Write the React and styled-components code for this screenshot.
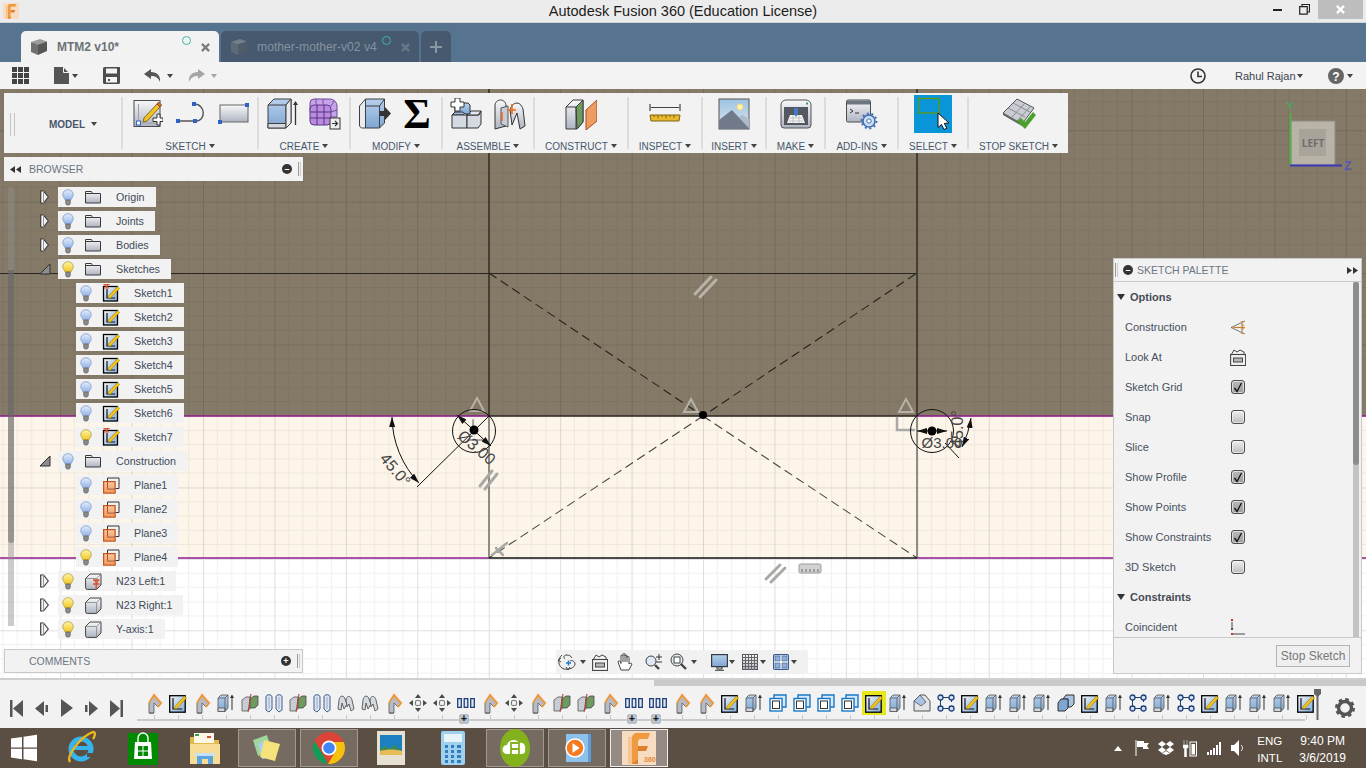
import styled, { createGlobalStyle } from 'styled-components'

const GlobalStyle = createGlobalStyle`
html, body {
  margin: 0;
  padding: 0;
  background: #fff;
}
body {
  font-family: "Liberation Sans", Arial, sans-serif;
}
* {
  box-sizing: border-box;
}
`

const Page = styled.div`
width: 1366px;
height: 768px;
overflow: hidden;
display: flex;
flex-direction: column;
`
const DefsSvg = styled.svg`
display: block;
flex: none;
`

/* window title */
const TitleBar = styled.div`
height: 23px;
flex: none;
display: grid;
grid-template-columns: 1fr auto 1fr;
align-items: start;
background: #ececec;
border-bottom: 1px solid #d4d4d4;
`
const AppBadge = styled.div`
width: 16px;
height: 16px;
margin: 3px 0 0 3px;
`
const WindowTitle = styled.div`
line-height: 23px;
font-size: 14.5px;
color: #1c1c1c;
`
const WinControls = styled.div`
justify-self: end;
display: flex;
padding-right: 3px;
`
const WinBtn = styled.div`
width: ${p => p.$w}px;
height: 19px;
display: flex;
align-items: center;
justify-content: center;
background: ${p => p.$close ? '#bdbdbd' : 'transparent'};
`

/* document tabs */
const TabBar = styled.div`
height: 39px;
flex: none;
display: flex;
align-items: flex-end;
gap: 2px;
padding-left: 21px;
background: #56738f;
`
const Tab = styled.div`
height: 31px;
width: ${p => p.$w}px;
display: flex;
align-items: center;
justify-content: ${p => p.$center ? 'center' : 'flex-start'};
border-radius: 5px 5px 0 0;
background: ${p => p.$active ? '#f2f2f2' : '#46596e'};
`
const TabName = styled.span`
font-size: ${p => p.$active ? 12 : 12.2}px;
font-weight: ${p => p.$active ? 700 : 400};
color: ${p => p.$active ? '#6d7277' : '#8592a0'};
margin-left: 10px;
white-space: nowrap;
`
const TabCube = styled.div`
margin-left: 10px;
display: flex;
`
const TabDot = styled.div`
margin: 5px 0 0 auto;
align-self: flex-start;
width: 9px;
height: 9px;
border-radius: 50%;
border: 1px solid #3fb5a5;
`
const TabClose = styled.div`
margin: 1px 9px 0 10px;
display: flex;
`

/* quick access row */
const QuickBar = styled.div`
height: 27px;
flex: none;
display: flex;
align-items: center;
background: #f3f3f3;
padding: 0 13px 0 12px;
`
const QuickItem = styled.div`
display: flex;
align-items: center;
margin-left: ${p => p.$auto ? 'auto' : `${p.$ml || 0}px`};
`
const UserName = styled.span`
font-size: 11px;
color: #3b4350;
margin-left: 29px;
width: 62px;
`
const Caret = styled.span`
display: inline-block;
width: 0;
height: 0;
flex: none;
border-left: 3.5px solid transparent;
border-right: 3.5px solid transparent;
border-top: 4px solid ${p => p.$c || '#444'};
margin-left: ${p => p.$ml || 0}px;
margin-top: ${p => p.$mt || 0}px;
`

/* 3D area */
const Viewport = styled.div`
position: relative;
height: 589px;
flex: none;
overflow: hidden;
display: flex;
flex-direction: column;
padding: 4px 0 5px 4px;
background: #857a68;
`
const CanvasSvg = styled.svg`
position: absolute;
left: 0;
top: 0;
`

const Toolbar = styled.div`
position: relative;
width: 1064px;
height: 60px;
flex: none;
display: flex;
background: #f2f2f2;
`
const ModelGroup = styled.div`
width: 117px;
flex: none;
display: flex;
align-items: center;
padding: 2px 0 0 6px;
`
const Grip = styled.div`
width: 5px;
height: 23px;
border-left: 1px solid #c4c4c4;
border-right: 1px solid #c4c4c4;
`
const ModelLabel = styled.span`
font-size: 10px;
font-weight: 700;
color: #47566b;
margin-left: 34px;
`
const ToolSep = styled.div`
width: 2px;
flex: none;
height: 52px;
align-self: center;
background: #dcdcdc;
`
const ToolGroup = styled.div`
width: ${p => p.$w}px;
flex: none;
display: flex;
flex-direction: column;
align-items: center;
`
const ToolIcons = styled.div`
height: 38px;
margin-top: 2px;
display: flex;
align-items: center;
gap: ${p => p.$gap || 10}px;
`
const ToolLabel = styled.div`
height: 20px;
padding-top: 8px;
display: flex;
align-items: flex-start;
font-size: 10px;
line-height: 12px;
color: #47566b;
white-space: nowrap;
`
const SigmaGlyph = styled.span`
width: 32px;
text-align: center;
font-family: "Liberation Serif", serif;
font-weight: 700;
font-size: 42px;
line-height: 32px;
color: #000;
`

/* browser panel */
const PanelHead = styled.div`
position: relative;
width: 299px;
height: ${p => p.$h}px;
flex: none;
display: flex;
align-items: center;
background: #f2f2f2;
margin-top: ${p => p.$auto ? 'auto' : `${p.$mt || 0}px`};
border: ${p => p.$border ? '1px solid #c9c9c9' : 'none'};
`
const PanelName = styled.span`
font-size: 10.5px;
color: #6b7683;
margin-left: ${p => p.$ml}px;
`
const PanelTools = styled.div`
margin-left: auto;
display: flex;
align-items: center;
gap: 6px;
padding-right: ${p => p.$pr || 2}px;
`
const RoundBtn = styled.div`
width: 10px;
height: 10px;
border-radius: 50%;
background: #333;
margin-left: ${p => p.$ml || 0}px;
display: flex;
align-items: center;
justify-content: center;
color: #fff;
font-size: 9px;
line-height: 10px;
font-weight: 700;
`
const MiniGrip = styled.div`
width: 3px;
height: 14px;
border-left: 1px solid #999;
border-right: 1px solid #ccc;
`
const Tree = styled.div`
position: relative;
margin-top: 6px;
display: flex;
flex-direction: column;
gap: 4px;
`
const TreeRow = styled.div`
display: flex;
align-items: center;
height: 20px;
padding-left: ${p => p.$child ? 72 : 34}px;
`
const TreeArrow = styled.div`
width: 20px;
height: 20px;
padding-left: ${p => p.$open ? 1 : 2}px;
display: flex;
align-items: center;
`
const Chip = styled.div`
height: 20px;
display: flex;
align-items: center;
background: #f2f2f2;
padding-right: 11px;
`
const ChipBulb = styled.div`
width: 20px;
display: flex;
justify-content: center;
`
const ChipIcon = styled.div`
width: 30px;
display: flex;
justify-content: center;
`
const ChipText = styled.span`
margin-left: 8px;
font-size: 10.7px;
color: #404a58;
white-space: nowrap;
`
const TreeTrack = styled.div`
position: absolute;
left: 4px;
top: 0;
width: 6px;
height: 439px;
background: rgba(140,140,140,.45);
`
const TreeThumb = styled.div`
margin-top: 83px;
height: 273px;
border-radius: 0 0 3px 3px;
background: rgba(80,80,80,.42);
`

/* sketch palette */
const Palette = styled.div`
position: absolute;
left: 1113px;
top: 169px;
width: 249px;
height: 416px;
display: flex;
flex-direction: column;
background: #f2f2f2;
border: 1px solid #c9c9c9;
`
const PaletteHead = styled.div`
height: 23px;
flex: none;
display: flex;
align-items: center;
border-bottom: 1px solid #c9c9c9;
padding-left: 1px;
`
const PaletteBody = styled.div`
position: relative;
flex: 1;
overflow: hidden;
`
const SectionHead = styled.div`
height: 30px;
display: flex;
align-items: center;
padding-left: 3px;
font-size: 11px;
font-weight: 700;
color: #464c55;
gap: 5px;
`
const SectionCaret = styled.span`
width: 0;
height: 0;
border-left: 4px solid transparent;
border-right: 4px solid transparent;
border-top: 6px solid #333;
`
const OptionRow = styled.div`
height: 30px;
display: flex;
align-items: center;
padding-left: 11px;
`
const OptionName = styled.span`
width: 102px;
font-size: 11px;
color: #46505e;
white-space: nowrap;
`
const OptionCell = styled.div`
width: 22px;
display: flex;
justify-content: center;
`
const CheckBox = styled.div`
width: 14px;
height: 14px;
border-radius: 3px;
border: 1px solid #4d4d4d;
background: ${p => p.$on ? 'linear-gradient(#b9b9b9, #9d9d9d)' : 'linear-gradient(#f0f0f0, #bcbcbc)'};
box-shadow: inset 0 0 0 1px rgba(255,255,255,.55);
display: flex;
align-items: center;
justify-content: center;
`
const PaletteTrack = styled.div`
position: absolute;
right: 2px;
top: 0;
bottom: 0;
width: 6px;
background: #c3c3c3;
`
const PaletteThumb = styled.div`
height: 183px;
border-radius: 3px;
background: #8d8d8d;
`
const PaletteFoot = styled.div`
height: 36px;
flex: none;
display: flex;
justify-content: flex-end;
align-items: center;
padding-right: 11px;
border-top: 1px solid #c9c9c9;
`
const StopBtn = styled.div`
width: 74px;
height: 22px;
border: 1px solid #b4b4b4;
background: #efefef;
font-size: 12px;
line-height: 20px;
text-align: center;
color: #787878;
`

/* bottom navigation */
const NavBar = styled.div`
position: absolute;
left: 556px;
top: 561px;
width: 252px;
height: 24px;
display: flex;
align-items: center;
background: #f1f1f1;
`
const NavItem = styled.div`
width: ${p => p.$w}px;
margin-left: ${p => p.$ml || 0}px;
flex: none;
display: flex;
justify-content: center;
align-items: center;
`

/* timeline */
const Timeline = styled.div`
height: 50px;
flex: none;
background: #f2f2f2;
border-top: 2px solid #cfcfcf;
`
const TimelineScroll = styled.div`
height: 6px;
margin-left: 654px;
background: #c9c9c9;
`
const TimelineRow = styled.div`
display: flex;
`
const Playback = styled.div`
width: 142px;
flex: none;
display: flex;
padding: 10px 0 0 4px;
`
const PlayBtn = styled.div`
width: 25px;
height: 24px;
display: flex;
align-items: center;
justify-content: center;
`
const Strip = styled.div`
position: relative;
display: flex;
height: 35px;
`
const StripRail = styled.div`
position: absolute;
left: -5px;
right: 13px;
top: 33px;
height: 2px;
background: #cbcbcb;
`
const StripItem = styled.div`
position: relative;
width: 24px;
flex: none;
padding-top: 5px;
&::after {
  content: "";
  position: absolute;
  left: 12px;
  top: 29px;
  width: 1px;
  height: 5px;
  background: #c9c9c9;
}
`
const StripIcon = styled.div`
width: 24px;
height: 24px;
display: flex;
align-items: center;
justify-content: center;
background: ${p => p.$on ? '#e6e61c' : 'transparent'};
`
const StripPlus = styled.div`
position: absolute;
left: ${p => p.$x}px;
top: 28px;
width: 10px;
height: 10px;
border-radius: 2px;
background: #b9c0c9;
color: #111;
font-size: 10px;
line-height: 10px;
text-align: center;
font-weight: 700;
`
const Marker = styled.div`
position: absolute;
left: 1172px;
top: 3px;
width: 7px;
height: 31px;
display: flex;
justify-content: center;
`
const GearCell = styled.div`
margin-left: 17px;
padding-top: 12px;
`

/* windows taskbar */
const Taskbar = styled.div`
height: 40px;
flex: none;
display: flex;
align-items: center;
gap: 4px;
background: #5b4f43;
`
const TaskItem = styled.div`
width: ${p => p.$w || 58}px;
height: 38px;
flex: none;
display: flex;
align-items: center;
justify-content: center;
border: 1px solid ${p => p.$on === 2 ? '#eeeeee' : p.$on ? 'rgba(255,255,255,.32)' : 'transparent'};
background: ${p => p.$on === 2 ? 'rgba(255,255,255,.34)' : p.$on ? 'rgba(255,255,255,.16)' : 'transparent'};
`
const Tray = styled.div`
margin-left: auto;
display: flex;
align-items: center;
padding-right: 20px;
color: #fff;
`
const TrayIcon = styled.div`
width: 24px;
display: flex;
justify-content: center;
`
const TrayText = styled.div`
display: flex;
flex-direction: column;
align-items: center;
gap: 3px;
padding-top: 2px;
font-size: ${p => p.$fs}px;
line-height: 14px;
margin-left: ${p => p.$ml}px;
white-space: nowrap;
`

/* drawings */
const Defs = () => (
  <DefsSvg width="0" height="0">
    <defs>
      <linearGradient id="gBlue" x1="0" y1="0" x2="0" y2="1">
        <stop offset="0" stopColor="#b6d0ec" />
        <stop offset="1" stopColor="#7fa5d3" />
      </linearGradient>
      <linearGradient id="gGrey" x1="0" y1="0" x2="0" y2="1">
        <stop offset="0" stopColor="#f8f8fa" />
        <stop offset="1" stopColor="#adb4c0" />
      </linearGradient>
      <linearGradient id="gSheet" x1="0" y1="0" x2="1" y2="1">
        <stop offset="0" stopColor="#f4f6fa" />
        <stop offset="1" stopColor="#7faad8" />
      </linearGradient>
      <linearGradient id="gBulbBlue" x1="0" y1="0" x2="0" y2="1">
        <stop offset="0" stopColor="#e6effc" />
        <stop offset="1" stopColor="#92b2e8" />
      </linearGradient>
      <linearGradient id="gBulbGold" x1="0" y1="0" x2="0" y2="1">
        <stop offset="0" stopColor="#fff6a8" />
        <stop offset="1" stopColor="#f0c81e" />
      </linearGradient>
      <linearGradient id="gPic" x1="0" y1="0" x2="0" y2="1">
        <stop offset="0" stopColor="#9ec3e2" />
        <stop offset="1" stopColor="#dbe6ef" />
      </linearGradient>
      <linearGradient id="gOrange" x1="0" y1="0" x2="0" y2="1">
        <stop offset="0" stopColor="#f9c9a0" />
        <stop offset="1" stopColor="#ef9a5e" />
      </linearGradient>
    </defs>
  </DefsSvg>
)

const Bulb = ({ on }) => (
  <svg width="12" height="17" viewBox="0 0 12 17">
    <path d="M6 .7C3 .7.8 2.9.8 5.6c0 2.3 1.6 3.4 2.4 5.4h5.6c.8-2 2.4-3.1 2.4-5.4C11.2 2.9 9 .7 6 .7z" fill={`url(#${on ? 'gBulbGold' : 'gBulbBlue'})`} stroke={on ? '#b09a3a' : '#7e96c4'} strokeWidth=".8" />
    <path d="M3.7 11h4.600v3.400l-1 1.600H4.700l-1-1.600z" fill="#8b8b8b" stroke="#555" strokeWidth=".6" />
  </svg>
)
const Folder = () => (
  <svg width="16" height="14" viewBox="0 0 16 14">
    <path d="M.5 13V1.500h6l1 2h8V13z" fill="url(#gGrey)" stroke="#3c3c3c" />
    <path d="M.5 3.500h7" stroke="#3c3c3c" />
  </svg>
)
const SketchLeaf = ({ pin }) => (
  <svg width="18" height="18" viewBox="0 0 18 18">
    <rect x="1.5" y="2.5" width="14" height="14.5" fill="url(#gSheet)" stroke="#000" strokeWidth="1.3" />
    <path d="M5 5v9h8" fill="none" stroke="#111" strokeWidth="1.2" />
    <path d="M6.500 12l9-9.500 2 2-9 9.500-2.500.4z" fill="#f2c318" stroke="#9a7a10" strokeWidth=".6" />
    {pin && <path d="M1.500 .5h6M3 .8l1.500 2.500L6 .8M2 4h5" stroke="#e0512a" strokeWidth="1.2" fill="none" />}
  </svg>
)
const PlaneLeaf = () => (
  <svg width="17" height="17" viewBox="0 0 17 17">
    <path d="M4.500 4.500V1h11.500v10.500h-4" fill="none" stroke="#333" />
    <rect x=".6" y="4.6" width="11.5" height="11.5" fill="url(#gOrange)" stroke="#c4541b" strokeWidth="1.2" />
    <path d="M4.500 4.800v7.300h7.400" fill="none" stroke="#a85a2e" />
  </svg>
)
const BodyLeaf = ({ pin }) => (
  <svg width="17" height="17" viewBox="0 0 17 17">
    <path d="M.6 5.500L5 1h11v11l-4.400 4.400H2.400a1.800 1.800 0 01-1.800-1.800z" fill="url(#gGrey)" stroke="#444" />
    <path d="M.6 5.500h11v10.900M11.600 5.500L16 1" fill="none" stroke="#777" strokeWidth=".7" />
    {pin && <path d="M8 7h6.500M9.500 7l2 3 2-3M8 11h6.500M11.200 11v5" stroke="#dd4f26" strokeWidth="1.3" fill="none" />}
  </svg>
)
const Closed = () => (
  <svg width="9" height="14" viewBox="0 0 9 14">
    <path d="M.7 1h2.800L8.300 7l-4.800 6H.7z" fill="#f2f2f2" stroke="#3c3c3c" strokeWidth="1.2" />
    <path d="M3.500 1v12" stroke="#9a9a9a" />
  </svg>
)
const Opened = () => (
  <svg width="12" height="12" viewBox="0 0 12 12">
    <path d="M11 1v10H1z" fill="#8d8d8d" stroke="#2e2e2e" />
  </svg>
)
const DoubleArrow = ({ left, c = '#333' }) => (
  <svg width="11" height="7" viewBox="0 0 11 7">
    <path d={left ? 'M5 0v7L0 3.500zM11 0v7L6 3.500z' : 'M0 0v7l5-3.500zM6 0v7l5-3.500z'} fill={c} />
  </svg>
)
const Cube = ({ c = '#6f6f6f', t = '#9a9a9a', s = '#575757' }) => (
  <svg width="16" height="16" viewBox="0 0 16 16">
    <path d="M0 3l9-3 7 2.500-9 3z" fill={t} />
    <path d="M0 3l7 2.500V16L0 13z" fill={c} />
    <path d="M7 5.500l9-3V12l-9 4z" fill={s} />
  </svg>
)
const CrossMark = ({ c, s = 9, w = 2.5 }) => (
  <svg width={s} height={s} viewBox="0 0 10 10">
    <path d="M1 1l8 8M9 1l-8 8" stroke={c} strokeWidth={w} />
  </svg>
)

/* toolbar art */
const IconSketch = () => (
  <svg width="32" height="32" viewBox="0 0 32 32">
    <rect x="3" y="2.500" width="26" height="26" fill="url(#gGrey)" stroke="#4a4a4a" />
    <path d="M7.500 25V6M7.500 25H25" stroke="#9aa0aa" />
    <rect x="5.500" y="23" width="4" height="4" fill="#fff" stroke="#2f66c8" />
    <path d="M13 20l13-14 3 3-13 14-4 1z" fill="#f3c22b" stroke="#8b6a12" />
    <path d="M26 6l1.500-2 3 3-1.500 2z" fill="#e2703a" stroke="#8b4a12" />
    <path d="M22 20h4v-4h3v4h3v3.500h-3V27h-3v-3.500h-4z" fill="#fff" stroke="#333" />
  </svg>
)
const IconLine = () => (
  <svg width="32" height="32" viewBox="0 0 32 32">
    <path d="M4 23h18M20 6c12 0 12 17 2 17" fill="none" stroke="#555" strokeWidth="1.4" />
    <rect x="2" y="21" width="4" height="4" fill="#2f62c4" />
    <rect x="19" y="21" width="4" height="4" fill="#2f62c4" />
    <rect x="18" y="4" width="4" height="4" fill="#2f62c4" />
  </svg>
)
const IconRect = () => (
  <svg width="32" height="32" viewBox="0 0 32 32">
    <rect x="3" y="7" width="28" height="17" fill="url(#gGrey)" stroke="#666" />
    <rect x="28" y="5" width="4" height="4" fill="#2f62c4" />
    <rect x="1" y="22" width="4" height="4" fill="#2f62c4" />
  </svg>
)
const IconExtrude = () => (
  <svg width="32" height="32" viewBox="0 0 32 32">
    <path d="M1 7l6-6h17v24l-5 5H1z" fill="url(#gBlue)" stroke="#3f3f3f" />
    <path d="M1 7h18v23M19 7l5-6" fill="none" stroke="#3f3f3f" />
    <path d="M1 25.500h18V30H1z" fill="#d4d8de" stroke="#3f3f3f" />
    <path d="M19 7l5-6v24l-5 5z" fill="#e6ebf2" stroke="#3f3f3f" />
    <path d="M28.500 27V5" stroke="#333" strokeWidth="1.3" />
    <path d="M26 7l2.500-4L31 7z" fill="#333" />
  </svg>
)
const IconForm = () => (
  <svg width="32" height="32" viewBox="0 0 32 32">
    <path d="M5 1h16a7 7 0 017 7v11H8a7 7 0 01-7-7V5a4 4 0 014-4z" fill="#c8a3e8" stroke="#6b4a9a" />
    <rect x="1" y="7" width="21" height="20" rx="4" fill="#b98ae0" stroke="#5a3a8a" />
    <path d="M8 7v20M15 7v20M1 14h21M1 20h21" stroke="#54357f" />
    <path d="M8 1c-2 2-1 4 0 6M15 1c-2 2-1 4 0 6M24 3c1 2-1 3-2 5M28 12l-6 2" stroke="#6b4a9a" fill="none" />
    <rect x="21" y="20" width="10" height="11" fill="#eee" stroke="#333" />
    <path d="M23 25.500h5M26 23l2.500 2.500L26 28" stroke="#333" strokeWidth="1.2" fill="none" />
  </svg>
)
const IconPress = () => (
  <svg width="32" height="32" viewBox="0 0 32 32">
    <path d="M0.500 8l6-7v29h-3c-1.500 0-3-1-3-3z" fill="#e8ebf0" stroke="#3f3f3f" />
    <path d="M6.500 1h19v24l-5 5h-14z" fill="url(#gBlue)" stroke="#3f3f3f" />
    <path d="M6.500 8h14v22M20.500 8l5-7" fill="none" stroke="#3f3f3f" />
    <path d="M21 13h5v-4l6 6.500-6 6.500v-4h-5z" fill="#333" />
  </svg>
)
const IconAssemble = () => (
  <svg width="32" height="32" viewBox="0 0 32 32">
    <path d="M2 17h11l4-4h-11z" fill="#9db8dc" stroke="#333" />
    <path d="M2 17h15v13H2z" fill="#d5dae2" stroke="#333" />
    <path d="M17 30V17h12l2-4v13l-3 4z" fill="#d5dae2" stroke="#333" />
    <path d="M17 17l4-4h10l-3 4z" fill="#e5e8ee" stroke="#333" />
    <path d="M7 5h11l2 2v9h-5l-2-2H5V5z" fill="url(#gBlue)" stroke="#333" />
    <path d="M5 0h5v4h4v5h-4v4H5V9H1V4h4z" fill="#fff" stroke="#333" />
  </svg>
)
const IconJoint = () => (
  <svg width="32" height="32" viewBox="0 0 32 32">
    <path d="M1 8c0-8 11-8 11 0v20l-11 3z" fill="url(#gGrey)" stroke="#333" />
    <path d="M7 10l7-2v21l-7-3z" fill="#c8ccd4" stroke="#555" />
    <path d="M16 12c2-8 10-10 13-1l2 17-5 3-3-16-5 12z" fill="url(#gGrey)" stroke="#333" />
    <path d="M8 23v-9M18 6v10M14 12h8" stroke="#ef6a17" strokeWidth="1.6" />
  </svg>
)
const IconPlane = () => (
  <svg width="32" height="32" viewBox="0 0 32 32">
    <path d="M1 9l7-7h10v22l-6 7H1z" fill="url(#gGrey)" stroke="#3c3c3c" />
    <path d="M11 9l7-7v22l-6 7z" fill="#6e9a5e" stroke="#3c3c3c" />
    <path d="M1 9h10v22" fill="none" stroke="#3c3c3c" />
    <path d="M21 12l11-10v21l-11 9z" fill="#ee9c62" stroke="#a35020" />
  </svg>
)
const IconRuler = () => (
  <svg width="32" height="24" viewBox="0 0 32 24">
    <path d="M2 5.500h28M1 2v7M31 2v7" stroke="#444" strokeWidth="1.2" />
    <path d="M1 13h30l-1 6H2z" fill="#e9b82d" stroke="#7d6412" />
    <path d="M5 13v2M9 13v3M13 13v2M17 13v3M21 13v2M25 13v3" stroke="#7d6412" />
  </svg>
)
const IconPicture = () => (
  <svg width="32" height="32" viewBox="0 0 32 32">
    <rect x="1" y="1" width="30" height="30" fill="url(#gPic)" stroke="#555" />
    <circle cx="22" cy="9" r="3" fill="#fff5b0" stroke="#f5d878" />
    <path d="M1 31V22l13-10 17 18v1z" fill="#707a88" />
    <path d="M14 12l17 18v-9l-6-4-5 2z" fill="#adbccb" />
  </svg>
)
const IconPrinter = () => (
  <svg width="32" height="32" viewBox="0 0 32 32">
    <path d="M1 7a5 5 0 015-5h20a5 5 0 015 5v20a3 3 0 01-3 3H4a3 3 0 01-3-3z" fill="url(#gGrey)" stroke="#555" />
    <rect x="4" y="9" width="24" height="18" fill="#53575f" />
    <path d="M7 25l3-8h12l3 8z" fill="#f2f2f2" />
    <path d="M14 10h4v6l-2 3-2-3z" fill="#4679c5" />
    <path d="M10 20h12M9 23h14M13 17v8M19 17v8" stroke="#aaa" strokeWidth=".6" />
    <rect x="26" y="4.500" width="2" height="2" fill="#2aa14a" />
  </svg>
)
const IconAddIn = () => (
  <svg width="32" height="32" viewBox="0 0 32 32">
    <rect x="0.500" y="2" width="24" height="22" rx="1.5" fill="url(#gGrey)" stroke="#4d4d4d" />
    <rect x="1" y="2.500" width="23" height="4" fill="#6d7680" />
    <path d="M4 11l3 2-3 2M9 15h4" stroke="#333" fill="none" />
    <circle cx="23" cy="23" r="6" fill="#cfe0f5" stroke="#3b6bb0" strokeWidth="1.5" />
    <circle cx="23" cy="23" r="7.500" fill="none" stroke="#3b6bb0" strokeWidth="1.8" strokeDasharray="2 2.700" />
    <circle cx="23" cy="23" r="2.200" fill="#fff" stroke="#3b6bb0" />
  </svg>
)
const IconSelect = () => (
  <svg width="38" height="38" viewBox="0 0 38 38">
    <rect width="38" height="38" fill="#0995d8" />
    <rect x="4.500" y="3.500" width="20.500" height="14.500" fill="none" stroke="#5f9a12" strokeWidth="1.3" />
    <path d="M24 18v14.500l3.500-3 2.500 5 2.800-1.300-2.500-4.800 4.700-.4z" fill="#fff" stroke="#111" />
  </svg>
)
const IconStop = () => (
  <svg width="34" height="32" viewBox="0 0 34 32">
    <path d="M1 15L15 1l17 9-12 16z" fill="#c9ccd2" stroke="#555" />
    <path d="M6 10l17 9M11 5l17 9M10 19L23 5M15 23L28 9" stroke="#8a8d93" />
    <path d="M1 15l19 11v2L1 17z" fill="#666" />
    <path d="M15 23l4-3 4 4 8-10 3 3-11 14z" fill="#4ea02e" />
  </svg>
)

/* small timeline art */
const TlFillet = () => (
  <svg width="18" height="22" viewBox="0 0 18 22">
    <path d="M4 21V11l5-8 7 8-3 4-4-4v10z" fill="#b7bcc4" stroke="#555" strokeWidth=".8" />
    <path d="M4 11l5-8 7 8-3 4" fill="none" stroke="#ee9a3c" strokeWidth="2" />
    <path d="M4 21h5" stroke="#777" strokeWidth="1.5" />
  </svg>
)
const TlSketch = () => (
  <svg width="18" height="19" viewBox="0 0 18 19">
    <rect x=".7" y="1.700" width="15.500" height="16.500" fill="url(#gSheet)" stroke="#000" strokeWidth="1.3" />
    <path d="M4 4v11h9" fill="none" stroke="#111" strokeWidth="1.2" />
    <path d="M6 12.500L15.500 2l2 2L8 14.500l-2.500.5z" fill="#f2c318" stroke="#9a7a10" strokeWidth=".6" />
  </svg>
)
const TlExtrude = () => (
  <svg width="18" height="20" viewBox="0 0 18 20">
    <path d="M1 5l3-3h7v13l-3 3.500H1z" fill="url(#gBlue)" stroke="#555" strokeWidth=".8" />
    <path d="M1 15h7v3.500H1z" fill="#d4d8de" stroke="#555" strokeWidth=".8" />
    <path d="M1 5h7v13.500M8 5l3-3" fill="none" stroke="#555" strokeWidth=".8" />
    <path d="M15 17V4" stroke="#333" />
    <path d="M13 5l2-3.500L17 5z" fill="#333" />
  </svg>
)
const TlSplit = () => (
  <svg width="18" height="20" viewBox="0 0 18 20">
    <path d="M1 7l4-3h4v12l-3 2H1z" fill="#c8ccd4" stroke="#555" strokeWidth=".8" />
    <path d="M9 6l4-3h4v9l-3 3H9z" fill="#6e9a5e" stroke="#445" strokeWidth=".8" />
    <path d="M10 1L7 19" stroke="#b2401e" strokeWidth="1.1" />
  </svg>
)
const TlMirror = () => (
  <svg width="18" height="20" viewBox="0 0 18 20">
    <path d="M1 4c0-3 6-3 6 0v12l-3 3-3-2z" fill="#dfe6f2" stroke="#2f4f80" strokeWidth=".9" />
    <path d="M17 4c0-3-6-3-6 0v12l3 3 3-2z" fill="#dfe6f2" stroke="#2f4f80" strokeWidth=".9" />
    <path d="M4 4v12M14 4v12" stroke="#7f97bd" strokeWidth=".8" />
  </svg>
)
const TlJoint = () => (
  <svg width="18" height="18" viewBox="0 0 18 18">
    <path d="M1 15l1-9c1-5 5-5 6-1l2 5-3 5-2-6-1 7z" fill="#d5d9e0" stroke="#555" strokeWidth=".9" />
    <path d="M9 5c2-4 5-3 6 1l2 9-3 2-2-7-2 3z" fill="#d5d9e0" stroke="#555" strokeWidth=".9" />
  </svg>
)
const TlMove = () => (
  <svg width="18" height="18" viewBox="0 0 18 18">
    <path d="M9 0l3 4H6zM9 18l-3-4h6zM0 9l4-3v6zM18 9l-4 3V6z" fill="#4a4a4a" />
    <rect x="6.500" y="6.500" width="5" height="5" rx="1.5" fill="none" stroke="#777" strokeWidth="1.1" />
  </svg>
)
const TlPattern = () => (
  <svg width="18" height="10" viewBox="0 0 18 10">
    <path d="M.7.700h3.600v8.600H.7zM7.200.700h3.600v8.600H7.200zM13.700.700h3.600v8.600h-3.600z" fill="#dce6f4" stroke="#1f3f78" strokeWidth="1.3" />
  </svg>
)
const TlBoxBlue = () => (
  <svg width="18" height="18" viewBox="0 0 18 18">
    <path d="M5 4V1h12v12h-4" fill="#d8e8f8" stroke="#1878c8" strokeWidth="1.4" />
    <rect x="1" y="4.500" width="12" height="12.500" fill="#fff" stroke="#1878c8" strokeWidth="1.4" />
    <rect x="3.500" y="7" width="7" height="7.500" fill="none" stroke="#333" />
  </svg>
)
const TlChamfer = () => (
  <svg width="18" height="18" viewBox="0 0 18 18">
    <path d="M1 7l6-6h5l5 6v10H1z" fill="#e2e4e8" stroke="#555" />
    <path d="M1 7l6-6 6 7-5 4z" fill="#a9c3e4" stroke="#555" strokeWidth=".8" />
  </svg>
)
const TlNodes = () => (
  <svg width="18" height="18" viewBox="0 0 18 18">
    <path d="M5 3.500h8M5 14.500h8M3.500 5v8M14.500 5v3" stroke="#1f3f78" fill="none" />
    <circle cx="3.500" cy="3.500" r="2.500" fill="#cfe0f5" stroke="#1f3f78" strokeWidth="1.3" />
    <circle cx="14.500" cy="3.500" r="2.500" fill="#cfe0f5" stroke="#1f3f78" strokeWidth="1.3" />
    <circle cx="3.500" cy="14.500" r="2.500" fill="#cfe0f5" stroke="#1f3f78" strokeWidth="1.3" />
    <circle cx="14.500" cy="14.500" r="2.500" fill="#cfe0f5" stroke="#1f3f78" strokeWidth="1.3" />
  </svg>
)
const TlCombine = () => (
  <svg width="18" height="18" viewBox="0 0 18 18">
    <path d="M6 5l3-4h8v9l-3 3H11V5z" fill="#a9c3e4" stroke="#333" />
    <path d="M1 9l3-4h7v9l-3 3H1z" fill="#7fa5d3" stroke="#333" />
  </svg>
)

const TL_ICONS = {
  f: TlFillet, s: TlSketch, e: TlExtrude, c: TlSplit, m: TlMirror, j: TlJoint, v: TlMove,
  p: TlPattern, b: TlBoxBlue, h: TlChamfer, n: TlNodes, u: TlCombine,
}
const TIMELINE = 'f s f e c m c m j j f v v p f v f c c f p p f f s e b b b b S e h n s e e e u s e n e n s e e e s'.split(' ')

/* taskbar art */
const WinLogo = () => (
  <svg width="26" height="28" viewBox="0 0 26 28">
    <path d="M0 4.500l11-1.600v10.500H0zM12.500 2.700L26 .7v12.700H12.500zM0 14.800h11v10.400L0 23.600zM12.500 14.800H26v12.500l-13.500-2z" fill="#fff" />
  </svg>
)
const IELogo = () => (
  <svg width="30" height="34" viewBox="0 0 30 34">
    <circle cx="15" cy="18" r="10" fill="none" stroke="#36b4ee" strokeWidth="5" />
    <path d="M8 17h15" stroke="#36b4ee" strokeWidth="4" />
    <path d="M21 24h6" stroke="#5b4f43" strokeWidth="4" />
    <path d="M4 31C0 25 14 6 27 1c3 0 2 4 0 7" fill="none" stroke="#eab71c" strokeWidth="2.4" />
  </svg>
)
const StoreLogo = () => (
  <svg width="30" height="34" viewBox="0 0 30 34">
    <rect y="2" width="30" height="32" fill="#008a00" />
    <path d="M10 11V7a5 5 0 0110 0v4" fill="none" stroke="#fff" strokeWidth="1.4" />
    <path d="M7 11h16l1 17H6z" fill="#fff" />
    <path d="M10 15h4.500v4.500H10zM15.500 15H20v4.500h-4.500zM10 20.500h4.500V25H10zM15.500 20.500H20V25h-4.500z" fill="#008a00" />
  </svg>
)
const ExplorerLogo = () => (
  <svg width="32" height="34" viewBox="0 0 32 34">
    <path d="M1 6h12l2 3h15v24H1z" fill="#e5b84e" />
    <path d="M5 2h20v10H5z" fill="#fdf8e6" />
    <path d="M6 3h4v2H6z" fill="#3c9e44" /><path d="M18 5h4v2h-4z" fill="#d24a3a" />
    <path d="M1 13h30v20H1z" fill="#f6dc95" />
    <path d="M8 24h16v9h-5v-5h-6v5H8z" fill="#5ea6e0" />
    <path d="M6 22h20v3H6z" fill="#c6e2f7" />
  </svg>
)
const NotesLogo = () => (
  <svg width="32" height="30" viewBox="0 0 32 30">
    <path d="M2 7l14-5 5 16-14 5z" fill="#9ed79a" />
    <path d="M7 10l10-2 4 16-10 2z" fill="#a9cfee" />
    <path d="M13 7l16 4-5 17-15-4z" fill="#f6e27d" />
  </svg>
)
const ChromeLogo = () => (
  <svg width="32" height="32" viewBox="0 0 32 32">
    <circle cx="16" cy="16" r="16" fill="#db4437" />
    <path d="M16 32A16 16 0 011.500 9L9 21l6 11z" fill="#0f9d58" />
    <path d="M30.800 10A16 16 0 0115 32l7-12-4-10z" fill="#f4c20d" />
    <circle cx="16" cy="16" r="7.5" fill="#fff" />
    <circle cx="16" cy="16" r="5.8" fill="#4285f4" />
  </svg>
)
const PhotoLogo = () => (
  <svg width="28" height="34" viewBox="0 0 28 34">
    <rect width="28" height="34" fill="#e7e1d2" />
    <rect x="3" y="4" width="22" height="20" fill="#1b7fc0" />
    <path d="M3 24v-6l5-3 4 3 5-4 8 6v4z" fill="#3c8a54" />
    <path d="M3 24v-4c7-2 15-2 22 0v4z" fill="#e6bb56" />
  </svg>
)
const CalcLogo = () => (
  <svg width="24" height="34" viewBox="0 0 24 34">
    <rect width="24" height="34" rx="2" fill="#9fd0ee" />
    <rect x="3" y="3" width="18" height="8" fill="#e8f3f9" />
    <path d="M4 14h3v3H4zM10 14h3v3h-3zM16 14h4v3h-4zM4 19h3v3H4zM10 19h3v3h-3zM16 19h4v3h-4zM4 24h3v3H4zM10 24h3v3h-3zM16 24h4v3h-4zM4 29h3v3H4zM10 29h3v3h-3zM16 29h4v3h-4z" fill="#2f7fc0" />
  </svg>
)
const CloudLogo = () => (
  <svg width="30" height="38" viewBox="0 0 30 38">
    <ellipse cx="15" cy="19" rx="15" ry="19" fill="#83b21c" />
    <path d="M7 25a4.500 4.500 0 010-9c1-5 9-7 12-2 5-1 7 3 6 6 1 3-1 5-3 5z" fill="#fff" />
    <path d="M11 14h8v12h-8zM11 20h8" fill="none" stroke="#83b21c" strokeWidth="1.8" />
  </svg>
)
const VideoLogo = () => (
  <svg width="28" height="32" viewBox="0 0 28 32">
    <path d="M22 2h6v28h-6z" fill="#5a9cd8" />
    <path d="M3 2h22v28H3z" fill="#8fc2ea" />
    <circle cx="12" cy="16" r="9" fill="#f47b20" stroke="#fff" strokeWidth="1.5" />
    <path d="M9.500 11l7 5-7 5z" fill="#fff" />
  </svg>
)
const FusionLogo = ({ size = 34, label }) => (
  <svg width={size} height={size} viewBox="0 0 34 34">
    <rect width="34" height="34" fill="#f8dcc2" />
    <path d="M10 33V7c0-3 2-5 5-5h13l-2 6H19c-2 0-3 1-3 3v22z" fill="#f09a40" />
    <path d="M16 15h10l-2 5h-8zM10 33l6-5v5z" fill="#dc8030" />
    <path d="M6 6h4v27H6z" fill="#f7c594" />
    {label && <text x="22" y="31" fontFamily="Liberation Sans" fontSize="7" fontWeight="700" fill="#e08a3a">360</text>}
  </svg>
)

/* stage drawing: backgrounds, grid and sketch geometry */
const OX = 703
const OY = 327
const Stage = () => {
  const left = 489
  const right = 917
  const top = 184
  const mid = 327
  const low = 469
  const dark = '#37332b'
  const soft = '#777570'
  const purple = '#8f1b90'
  return (
    <CanvasSvg width="1366" height="589" viewBox="0 0 1366 589">
      <defs>
        <pattern id="grid" width="71.43" height="71.43" patternUnits="userSpaceOnUse" patternTransform={`translate(${OX} ${OY})`}>
          <path d="M14.29 0V71.43M28.57 0V71.43M42.86 0V71.43M57.14 0V71.43M0 14.29H71.43M0 28.57H71.43M0 42.86H71.43M0 57.14H71.43" stroke="#000" strokeOpacity=".055" strokeWidth="1" fill="none" />
          <path d="M.5 0V71.43M0 .5H71.43" stroke="#000" strokeOpacity=".12" strokeWidth="1" fill="none" />
        </pattern>
        <marker id="arrowHead" viewBox="0 0 10 6" refX="10" refY="3" markerWidth="10" markerHeight="6" orient="auto-start-reverse" markerUnits="userSpaceOnUse">
          <path d="M0 0L10 3 0 6z" fill="#111" />
        </marker>
      </defs>
      <rect width="1366" height={mid} fill="#857a68" />
      <rect y={mid} width="1366" height={low - mid} fill="#fdf5ea" />
      <rect y={low} width="1366" height={589 - low} fill="#ffffff" />
      <rect width="1366" height="589" fill="url(#grid)" />

      <path d={`M0 ${top + .5}H${right}`} stroke="#2a2722" />
      <path d={`M${left} 0V${mid}M${right} 0V${mid}`} stroke={dark} strokeWidth="1.6" />
      <path d={`M${left} ${mid}V${low}M${right} ${mid}V${low}`} stroke={soft} strokeWidth="1.6" />
      <path d={`M${left} ${top}L${OX} ${mid}L${right} ${top}`} fill="none" stroke="#26231e" strokeWidth="1.1" strokeDasharray="9 5" />
      <path d={`M${OX} ${mid}L${left} ${low}M${OX} ${mid}L${right} ${low}`} fill="none" stroke="#444" strokeWidth="1.1" strokeDasharray="9 5" />
      <path d={`M0 ${mid}H${left}M${right} ${mid}H1366M0 ${low}H${left}M${right} ${low}H1366`} stroke={purple} strokeWidth="1.4" />
      <path d={`M${left} ${mid}H${right}`} stroke="#2a2722" strokeWidth="1.4" />
      <path d={`M${left} ${low}H${right}`} stroke="#111" strokeWidth="1.4" />
      <circle cx={OX} cy={mid - 1} r="4" fill="#000" />

      {/* constraint glyphs sit under the dimensions */}
      <g fill="none" stroke="#b8b3a8" strokeWidth="2">
        <path d="M477 309l7 13h-14z" />
        <path d="M691 310l7 13h-14z" />
        <path d="M906 310l7 13h-14z" />
        <path d="M695 205l16-17M700 208l16-17" strokeLinecap="round" strokeWidth="3" />
      </g>
      <g fill="none" stroke="#a8a8a4" strokeWidth="3" strokeLinecap="round">
        <path d="M480 397l12-15M485 400l12-15" />
        <path d="M766 490l14-14M771 493l14-14" />
        <path d="M492 466l15-12M496 459l7 7" strokeWidth="2.5" />
        <path d="M897 329v12h17" strokeWidth="2.5" />
        <path d="M473 331v7M468 351h16" strokeWidth="2" />
      </g>
      <rect x="799" y="475" width="22" height="9" rx="1.5" fill="#d2d2d2" stroke="#9a9a9a" />
      <path d="M802 480v3M806 480v3M810 480v3M814 480v3M818 480v3" stroke="#666" />

      {/* left hole */}
      <circle cx="474" cy="342" r="21.5" fill="none" stroke="#111" />
      <circle cx="474" cy="341" r="4.5" fill="#000" />
      <path d="M457 326L491 357" stroke="#111" markerStart="url(#arrowHead)" markerEnd="url(#arrowHead)" />
      <path d="M489 327L417 398" stroke="#111" />
      <path d="M392 328A97 97 0 00419 394" fill="none" stroke="#111" markerStart="url(#arrowHead)" markerEnd="url(#arrowHead)" />
      <text x="477" y="364" textAnchor="middle" fontFamily="Liberation Sans" fontSize="16" fill="#444" transform="rotate(40 477 358)">Ø3.00</text>
      <text x="395" y="386" textAnchor="middle" fontFamily="Liberation Sans" fontSize="16" fill="#444" transform="rotate(50 395 381)">45.0°</text>

      {/* right hole */}
      <circle cx="932" cy="342" r="21.5" fill="none" stroke="#111" />
      <circle cx="932" cy="342" r="4.5" fill="#000" />
      <path d="M917 342H947" stroke="#111" markerStart="url(#arrowHead)" markerEnd="url(#arrowHead)" />
      <path d="M945 354L959 369" stroke="#111" />
      <path d="M971 329A97 97 0 01962 358" fill="none" stroke="#111" markerStart="url(#arrowHead)" markerEnd="url(#arrowHead)" />
      <text x="942" y="359" textAnchor="middle" fontFamily="Liberation Sans" fontSize="15" fill="#444">Ø3.00</text>
      <text x="958" y="345" textAnchor="middle" fontFamily="Liberation Sans" fontSize="16" fill="#444" transform="rotate(-90 958 340)">45.0°</text>

      {/* view cube */}
      <path d="M1291 32h44v44h-44z" fill="#c2bdb4" fillOpacity=".85" stroke="#8d8a82" />
      <rect x="1299" y="40" width="27" height="27" fill="#a9a49a" />
      <text x="1313" y="58" textAnchor="middle" fontFamily="Open Sans" fontWeight="700" fontSize="10" fill="#6e6e6e">LEFT</text>
      <path d="M1290.5 24V76" stroke="#46bb3c" strokeWidth="1.6" />
      <path d="M1290 76.5H1342" stroke="#3a3ab8" strokeWidth="1.8" />
      <text x="1290" y="21" textAnchor="middle" fontFamily="Liberation Sans" fontSize="11" fontWeight="700" fill="#4aa85a">Y</text>
      <text x="1348" y="81" textAnchor="middle" fontFamily="Liberation Sans" fontSize="12" fontWeight="700" fill="#5656b8">Z</text>
    </CanvasSvg>
  )
}

const NavOrbit = () => (
  <svg width="18" height="20" viewBox="0 0 18 20">
    <path d="M4 3c-5 4-4 12 2 14 4 1 11-1 11-5 0-3-3-4-5-3M7 7C5 5 6 3 9 3c2 0 4 1 5 3" fill="none" stroke="#444" />
    <path d="M3 10l-3-2 3-2M8 15l2 3 2-3" fill="none" stroke="#444" />
    <path d="M8 11h5M10.500 8.500v5" stroke="#1e7fd0" strokeWidth="1.5" />
  </svg>
)
const NavLook = () => (
  <svg width="16" height="17" viewBox="0 0 16 17">
    <path d="M1 6l3-5 3 2 3-2 4 2v3" fill="none" stroke="#444" />
    <rect x=".6" y="5.500" width="15" height="11" fill="#f2f2f2" stroke="#444" strokeWidth="1.1" />
    <rect x="3.500" y="9" width="9" height="4" fill="#b6b6b6" stroke="#444" />
  </svg>
)
const NavHand = () => (
  <svg width="17" height="18" viewBox="0 0 17 18">
    <path d="M4 17L1 9c0-1.500 1.500-1.500 2-.5l1 2V3c0-1.500 2-1.500 2 0V1.500c0-1.500 2-1.500 2 0V3c0-1.500 2-1.500 2 0v1.500c0-1.500 2-1.500 2 0V11c1-1 2.500-1 3 0l-3 6z" fill="#fff" stroke="#444" />
    <path d="M6 3v6M8 2v7M10 3v6" stroke="#444" />
  </svg>
)
const NavZoom = () => (
  <svg width="17" height="18" viewBox="0 0 17 18">
    <circle cx="6" cy="8" r="5" fill="#dce8f5" stroke="#444" />
    <path d="M10 12l4 4" stroke="#444" strokeWidth="2.4" />
    <path d="M11 4h6M14 1v6M11 9h6" stroke="#333" />
  </svg>
)
const NavFit = () => (
  <svg width="17" height="18" viewBox="0 0 17 18">
    <circle cx="7" cy="7" r="6" fill="#e2ecf7" stroke="#444" />
    <rect x="4" y="4" width="6" height="6" fill="#fff" stroke="#444" />
    <path d="M11 11l5 5" stroke="#444" strokeWidth="2.4" />
  </svg>
)
const NavDisplay = () => (
  <svg width="17" height="17" viewBox="0 0 17 17">
    <rect x=".6" y=".6" width="15.8" height="12" fill="url(#gBlue)" stroke="#3a3a3a" strokeWidth="1.2" />
    <path d="M6 13h5v2H6zM4 16.300h9" stroke="#3a3a3a" fill="#eee" />
  </svg>
)
const NavGrid = () => (
  <svg width="16" height="16" viewBox="0 0 16 16">
    <rect x=".5" y=".5" width="15" height="15" fill="url(#gGrey)" stroke="#555" />
    <path d="M3.500 0v16M6.500 0v16M9.500 0v16M12.500 0v16M0 3.500h16M0 6.500h16M0 9.500h16M0 12.500h16" stroke="#666" />
  </svg>
)
const NavViews = () => (
  <svg width="16" height="16" viewBox="0 0 16 16">
    <rect x=".6" y=".6" width="14.8" height="14.8" rx="1" fill="#fff" stroke="#355d92" strokeWidth="1.2" />
    <path d="M2 2h5v5H2zM9 2h5v5H9zM2 9h5v5H2zM9 9h5v5H9z" fill="#8eb0da" stroke="#355d92" strokeWidth=".6" />
  </svg>
)
const Check = () => (
  <svg width="10" height="11" viewBox="0 0 10 11">
    <path d="M1.500 6l2.500 3.500L8.500 1" fill="none" stroke="#111" strokeWidth="1.3" />
  </svg>
)
const PalConstruction = () => (
  <svg width="17" height="15" viewBox="0 0 17 15">
    <path d="M15 1L1 7.500 15 14M4 7.500h10M12 3v9" fill="none" stroke="#555" strokeWidth=".8" />
    <path d="M11 2l3-1M3 7.500h12M11 13l3 1M13 4v7" fill="none" stroke="#ee8a12" strokeWidth="1.3" strokeDasharray="2 1.500" />
  </svg>
)
const PalCoincident = () => (
  <svg width="14" height="17" viewBox="0 0 14 17">
    <rect width="2" height="2" x="0" y="0" fill="#d8301e" />
    <rect width="2" height="2" x="0" y="14" fill="#d8301e" />
    <path d="M1 3v8M0 9l1 2 1-2M2 15h12" fill="none" stroke="#444" />
  </svg>
)

const ToolArt = {
  sketch: [IconSketch, IconLine, IconRect],
  create: [IconExtrude, IconForm],
  modify: [IconPress, 'sigma'],
  assemble: [IconAssemble, IconJoint],
  construct: [IconPlane],
  inspect: [IconRuler],
  insert: [IconPicture],
  make: [IconPrinter],
  addins: [IconAddIn],
  select: [IconSelect],
  stop: [IconStop],
}
const TOOL_GROUPS = [
  { label: 'SKETCH', art: 'sketch', w: 134, gap: 11 },
  { label: 'CREATE', art: 'create', w: 90 },
  { label: 'MODIFY', art: 'modify', w: 90 },
  { label: 'ASSEMBLE', art: 'assemble', w: 90, gap: 12 },
  { label: 'CONSTRUCT', art: 'construct', w: 92 },
  { label: 'INSPECT', art: 'inspect', w: 72 },
  { label: 'INSERT', art: 'insert', w: 62 },
  { label: 'MAKE', art: 'make', w: 57 },
  { label: 'ADD-INS', art: 'addins', w: 71 },
  { label: 'SELECT', art: 'select', w: 68 },
  { label: 'STOP SKETCH', art: 'stop', w: 99 },
]

const ROWS = [
  { name: 'Origin', kind: 'folder' },
  { name: 'Joints', kind: 'folder' },
  { name: 'Bodies', kind: 'folder' },
  { name: 'Sketches', kind: 'folder', on: true, open: true },
  { name: 'Sketch1', kind: 'sketch', child: true, pin: true },
  { name: 'Sketch2', kind: 'sketch', child: true },
  { name: 'Sketch3', kind: 'sketch', child: true },
  { name: 'Sketch4', kind: 'sketch', child: true },
  { name: 'Sketch5', kind: 'sketch', child: true },
  { name: 'Sketch6', kind: 'sketch', child: true },
  { name: 'Sketch7', kind: 'sketch', child: true, on: true, pin: true },
  { name: 'Construction', kind: 'folder', open: true },
  { name: 'Plane1', kind: 'plane', child: true },
  { name: 'Plane2', kind: 'plane', child: true },
  { name: 'Plane3', kind: 'plane', child: true },
  { name: 'Plane4', kind: 'plane', child: true, on: true },
  { name: 'N23 Left:1', kind: 'body', on: true, pin: true },
  { name: 'N23 Right:1', kind: 'body', on: true },
  { name: 'Y-axis:1', kind: 'body', on: true },
]

const RowArt = ({ kind, pin }) => {
  if (kind === 'folder') return <Folder />
  if (kind === 'sketch') return <SketchLeaf pin={pin} />
  if (kind === 'plane') return <PlaneLeaf />
  return <BodyLeaf pin={pin} />
}

const OPTIONS = [
  { name: 'Construction', art: <PalConstruction /> },
  { name: 'Look At', art: <NavLook /> },
  { name: 'Sketch Grid', on: true },
  { name: 'Snap' },
  { name: 'Slice' },
  { name: 'Show Profile', on: true },
  { name: 'Show Points', on: true },
  { name: 'Show Constraints', on: true },
  { name: '3D Sketch' },
]

const RoundHelp = () => (
  <svg width="16" height="16" viewBox="0 0 16 16">
    <circle cx="8" cy="8" r="8" fill="#666" />
    <text x="8" y="12.500" textAnchor="middle" fontFamily="Liberation Sans" fontSize="12" fontWeight="700" fill="#fff">?</text>
  </svg>
)

const ToolRun = ({ g }) => (
  <>
    <ToolSep />
    <ToolGroup $w={g.w}>
      <ToolIcons $gap={g.gap}>
        {ToolArt[g.art].map((Art, i) => (
          Art === 'sigma' ? <SigmaGlyph key={i}>Σ</SigmaGlyph> : <Art key={i} />
        ))}
      </ToolIcons>
      <ToolLabel>{g.label}<Caret $ml={3} $mt={3} /></ToolLabel>
    </ToolGroup>
  </>
)

export default function App() {
  return (
    <Page>
      <GlobalStyle />
      <Defs />
      <TitleBar>
        <AppBadge><FusionLogo size={16} /></AppBadge>
        <WindowTitle>Autodesk Fusion 360 (Education License)</WindowTitle>
        <WinControls>
          <WinBtn $w={27}>
            <svg width="9" height="3"><rect width="9" height="2" y="1" fill="#222" /></svg>
          </WinBtn>
          <WinBtn $w={27}>
            <svg width="11" height="11" viewBox="0 0 11 11">
              <path d="M3 2V.5h7.500V8H8.500M.7 2.700h7.500v7.500H.7z" fill="none" stroke="#222" strokeWidth="1.2" />
            </svg>
          </WinBtn>
          <WinBtn $w={45} $close><CrossMark c="#fff" /></WinBtn>
        </WinControls>
      </TitleBar>

      <TabBar>
        <Tab $active $w={198}>
          <TabCube><Cube /></TabCube>
          <TabName $active>MTM2 v10*</TabName>
          <TabDot />
          <TabClose><CrossMark c="#7c7c7c" /></TabClose>
        </Tab>
        <Tab $w={198}>
          <TabCube><Cube c="#5d6a78" t="#74808c" s="#4f5c6a" /></TabCube>
          <TabName>mother-mother-v02 v4</TabName>
          <TabDot />
          <TabClose><CrossMark c="#6a7785" /></TabClose>
        </Tab>
        <Tab $w={30} $center>
          <svg width="12" height="12"><path d="M6 0v12M0 6h12" stroke="#8a98a6" strokeWidth="2" /></svg>
        </Tab>
      </TabBar>

      <QuickBar>
        <QuickItem>
          <svg width="17" height="17" viewBox="0 0 17 17">
            <path d="M0 0h5v5H0zM6 0h5v5H6zM12 0h5v5h-5zM0 6h5v5H0zM6 6h5v5H6zM12 6h5v5h-5zM0 12h5v5H0zM6 12h5v5H6zM12 12h5v5h-5z" fill="#444" />
          </svg>
        </QuickItem>
        <QuickItem $ml={25}>
          <svg width="15" height="17" viewBox="0 0 15 17"><path d="M0 0h9l6 6v11H0z" fill="#555" /><path d="M9.500 0v5.500H15" fill="none" stroke="#f3f3f3" /></svg>
          <Caret $ml={3} />
        </QuickItem>
        <QuickItem $ml={25}>
          <svg width="17" height="17" viewBox="0 0 17 17">
            <path d="M0 1.500A1.500 1.500 0 011.500 0H17v15.500a1.500 1.500 0 01-1.500 1.500h-14A1.500 1.500 0 010 15.500z" fill="#4d4d4d" />
            <rect x="3" y="1.500" width="11" height="5" fill="#f3f3f3" /><rect x="3" y="10" width="11" height="5.500" fill="#f3f3f3" /><rect x="5" y="12" width="2" height="2" fill="#4d4d4d" />
          </svg>
        </QuickItem>
        <QuickItem $ml={24}>
          <svg width="17" height="14" viewBox="0 0 17 14"><path d="M7 0L0 5l7 5V7c4 0 7 1 9 6 1-6-3-10-9-10z" fill="#555" /></svg>
          <Caret $ml={6} />
        </QuickItem>
        <QuickItem $ml={15}>
          <svg width="17" height="14" viewBox="0 0 17 14"><path d="M10 0l7 5-7 5V7c-4 0-7 1-9 6C0 7 4 3 10 3z" fill="#a5a5a5" /></svg>
          <Caret $ml={6} $c="#a5a5a5" />
        </QuickItem>
        <QuickItem $auto>
          <svg width="16" height="16" viewBox="0 0 16 16"><circle cx="8" cy="8" r="7" fill="none" stroke="#333" strokeWidth="1.6" /><path d="M8 3.500V8.500H12" fill="none" stroke="#333" strokeWidth="1.6" /></svg>
          <UserName>Rahul Rajan</UserName>
          <Caret />
        </QuickItem>
        <QuickItem $ml={25}>
          <RoundHelp />
          <Caret $ml={3} />
        </QuickItem>
      </QuickBar>

      <Viewport>
        <Stage />
        <Toolbar>
          <ModelGroup>
            <Grip />
            <ModelLabel>MODEL</ModelLabel>
            <Caret $ml={6} />
          </ModelGroup>
          {TOOL_GROUPS.map(g => (
            <ToolRun key={g.label} g={g} />
          ))}
        </Toolbar>
        <PanelHead $h={24} $mt={4}>
          <PanelName $ml={6}><DoubleArrow left /></PanelName>
          <PanelName $ml={8}>BROWSER</PanelName>
          <PanelTools>
            <RoundBtn>–</RoundBtn>
            <MiniGrip />
          </PanelTools>
        </PanelHead>
        <Tree>
          <TreeTrack><TreeThumb /></TreeTrack>
          {ROWS.map(r => (
            <TreeRow key={r.name} $child={r.child}>
              {!r.child && <TreeArrow $open={r.open}>{r.open ? <Opened /> : <Closed />}</TreeArrow>}
              <Chip>
                <ChipBulb><Bulb on={r.on} /></ChipBulb>
                <ChipIcon><RowArt kind={r.kind} pin={r.pin} /></ChipIcon>
                <ChipText>{r.name}</ChipText>
              </Chip>
            </TreeRow>
          ))}
        </Tree>
        <PanelHead $h={24} $border $auto>
          <PanelName $ml={24}>COMMENTS</PanelName>
          <PanelTools>
            <RoundBtn>+</RoundBtn>
            <MiniGrip />
          </PanelTools>
        </PanelHead>

        <Palette>
          <PaletteHead>
            <MiniGrip />
            <RoundBtn $ml={5}>–</RoundBtn>
            <PanelName $ml={4}>SKETCH PALETTE</PanelName>
            <PanelTools $pr={3}><DoubleArrow /></PanelTools>
          </PaletteHead>
          <PaletteBody>
            <SectionHead><SectionCaret />Options</SectionHead>
            {OPTIONS.map(o => (
              <OptionRow key={o.name}>
                <OptionName>{o.name}</OptionName>
                <OptionCell>
                  {o.art || <CheckBox $on={o.on}>{o.on && <Check />}</CheckBox>}
                </OptionCell>
              </OptionRow>
            ))}
            <SectionHead><SectionCaret />Constraints</SectionHead>
            <OptionRow>
              <OptionName>Coincident</OptionName>
              <OptionCell><PalCoincident /></OptionCell>
            </OptionRow>
            <PaletteTrack><PaletteThumb /></PaletteTrack>
          </PaletteBody>
          <PaletteFoot><StopBtn>Stop Sketch</StopBtn></PaletteFoot>
        </Palette>

        <NavBar>
          <NavItem $w={21}><NavOrbit /></NavItem>
          <NavItem $w={12}><Caret /></NavItem>
          <NavItem $w={22}><NavLook /></NavItem>
          <NavItem $w={29}><NavHand /></NavItem>
          <NavItem $w={26}><NavZoom /></NavItem>
          <NavItem $w={24}><NavFit /></NavItem>
          <NavItem $w={8}><Caret /></NavItem>
          <NavItem $w={20} $ml={11}><NavDisplay /></NavItem>
          <NavItem $w={6}><Caret /></NavItem>
          <NavItem $w={18} $ml={6}><NavGrid /></NavItem>
          <NavItem $w={8}><Caret /></NavItem>
          <NavItem $w={20} $ml={4}><NavViews /></NavItem>
          <NavItem $w={6}><Caret /></NavItem>
        </NavBar>
      </Viewport>

      <Timeline>
        <TimelineScroll />
        <TimelineRow>
          <Playback>
            <PlayBtn><svg width="13" height="17"><path d="M0 0h2.500v17H0zM13 0v17L3 8.500z" fill="#555" /></svg></PlayBtn>
            <PlayBtn><svg width="13" height="15"><path d="M9 0v15L0 7.500zM10.500 4H13v7h-2.500z" fill="#555" /></svg></PlayBtn>
            <PlayBtn><svg width="12" height="18"><path d="M0 0l12 9-12 9z" fill="#555" /></svg></PlayBtn>
            <PlayBtn><svg width="13" height="15"><path d="M4 0v15l9-7.500zM0 4h2.500v7H0z" fill="#555" /></svg></PlayBtn>
            <PlayBtn><svg width="13" height="17"><path d="M13 0h-2.500v17H13zM0 0v17l10-8.500z" fill="#555" /></svg></PlayBtn>
          </Playback>
          <Strip>
            <StripRail />
            {TIMELINE.map((k, i) => {
              const Art = TL_ICONS[k === 'S' ? 's' : k]
              return (
                <StripItem key={i}>
                  <StripIcon $on={k === 'S'}><Art /></StripIcon>
                </StripItem>
              )
            })}
            <StripPlus $x={317}>+</StripPlus>
            <StripPlus $x={485}>+</StripPlus>
            <StripPlus $x={509}>+</StripPlus>
            <Marker>
              <svg width="7" height="31"><path d="M0 0h7v5L3.500 8 0 5z" fill="#666" /><rect x="2.500" y="6" width="2" height="25" fill="#666" /></svg>
            </Marker>
          </Strip>
          <GearCell>
            <svg width="20" height="20" viewBox="0 0 20 20">
              <circle cx="10" cy="10" r="6.500" fill="none" stroke="#555" strokeWidth="3.5" />
              <circle cx="10" cy="10" r="8.500" fill="none" stroke="#555" strokeWidth="3" strokeDasharray="3.500 3.170" />
            </svg>
          </GearCell>
        </TimelineRow>
      </Timeline>

      <Taskbar>
        <TaskItem $w={48}><WinLogo /></TaskItem>
        <TaskItem><IELogo /></TaskItem>
        <TaskItem><StoreLogo /></TaskItem>
        <TaskItem><ExplorerLogo /></TaskItem>
        <TaskItem $on={1}><NotesLogo /></TaskItem>
        <TaskItem $on={1}><ChromeLogo /></TaskItem>
        <TaskItem><PhotoLogo /></TaskItem>
        <TaskItem><CalcLogo /></TaskItem>
        <TaskItem $on={1}><CloudLogo /></TaskItem>
        <TaskItem $on={1}><VideoLogo /></TaskItem>
        <TaskItem $on={2}><FusionLogo label /></TaskItem>
        <Tray>
          <TrayIcon><svg width="8" height="5"><path d="M4 0l4 5H0z" fill="#fff" /></svg></TrayIcon>
          <TrayIcon>
            <svg width="15" height="16" viewBox="0 0 15 16"><path d="M1 0v16" stroke="#fff" /><path d="M2 1h7v2h5l-2 3 2 3H8V7H2z" fill="#fff" /></svg>
          </TrayIcon>
          <TrayIcon>
            <svg width="16" height="14" viewBox="0 0 16 14"><path d="M4 0l4 3-4 3-4-3zM12 0l4 3-4 3-4-3zM4 6l4 3-4 3-4-3zM12 6l4 3-4 3-4-3zM4 12.500L8 10l4 2.500L8 14z" fill="#fff" /></svg>
          </TrayIcon>
          <TrayIcon>
            <svg width="14" height="18" viewBox="0 0 14 18"><path d="M1 1v5M4 1v5M0 6h5v3H3.500v9h-2V9H0z" fill="#fff" stroke="#fff" strokeWidth=".5" /><rect x="7" y="3" width="6.500" height="14" fill="none" stroke="#fff" /><rect x="8.500" y="5" width="3.500" height="10.500" fill="#fff" /></svg>
          </TrayIcon>
          <TrayIcon>
            <svg width="15" height="13" viewBox="0 0 15 13"><path d="M0 10h2v3H0zM3 8h2v5H3zM6 6h2v7H6zM9 3h2v10H9zM12 0h2v13h-2z" fill="#fff" /></svg>
          </TrayIcon>
          <TrayIcon>
            <svg width="14" height="16" viewBox="0 0 14 16"><path d="M0 5h3l5-5v16l-5-5H0z" fill="#fff" /><path d="M10 5c2 2 2 4 0 6" stroke="#fff" fill="none" /></svg>
          </TrayIcon>
          <TrayText $fs={11.5} $ml={7}><span>ENG</span><span>INTL</span></TrayText>
          <TrayText $fs={12} $ml={17}><span>9:40 PM</span><span>3/6/2019</span></TrayText>
        </Tray>
      </Taskbar>
    </Page>
  )
}
